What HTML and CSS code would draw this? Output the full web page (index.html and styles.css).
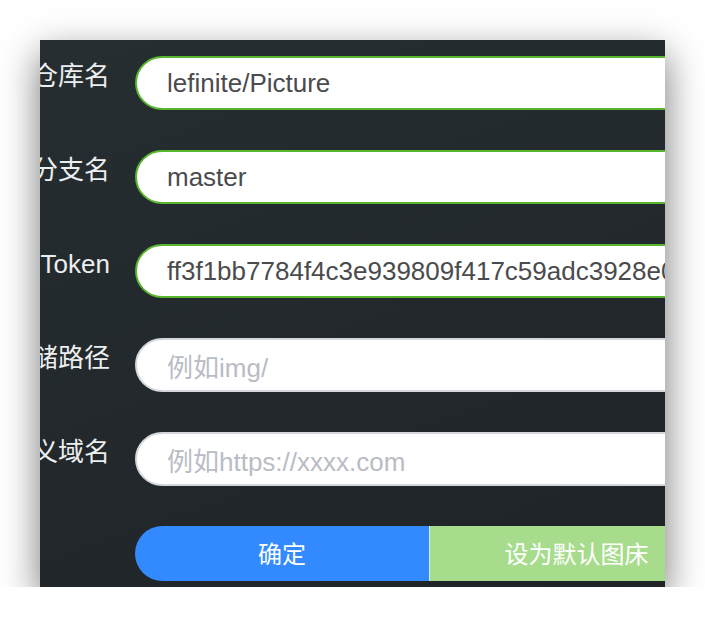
FILE: index.html
```html
<!DOCTYPE html>
<html lang="zh-CN">
<head>
<meta charset="utf-8">
<title>图床设置</title>
<link rel="stylesheet" href="styles.css">
</head>
<body>
<div class="frame">
  <form class="form">
    <div class="row">
      <label class="label">仓库名</label>
      <div class="field valid"><span class="value">lefinite/Picture</span></div>
    </div>
    <div class="row">
      <label class="label">分支名</label>
      <div class="field valid"><span class="value">master</span></div>
    </div>
    <div class="row">
      <label class="label">Token</label>
      <div class="field valid"><span class="value">ff3f1bb7784f4c3e939809f417c59adc3928e0a1</span></div>
    </div>
    <div class="row">
      <label class="label">存储路径</label>
      <div class="field"><span class="placeholder">例如img/</span></div>
    </div>
    <div class="row">
      <label class="label">自定义域名</label>
      <div class="field"><span class="placeholder">例如https://xxxx.com</span></div>
    </div>
    <div class="row">
      <span class="label"></span>
      <div class="buttons">
        <button type="button" class="btn btn-primary">确定</button>
        <button type="button" class="btn btn-success">设为默认图床</button>
      </div>
    </div>
  </form>
</div>
</body>
</html>
```

FILE: styles.css
```css
html, body {
  margin: 0;
  padding: 0;
  background: #ffffff;
}

body {
  font-family: "Liberation Sans", "Noto Sans CJK SC", sans-serif;
  padding: 40px 0 0 40px;
}

.frame {
  width: 625px;
  height: 547px;
  overflow: hidden;
  background: linear-gradient(160deg, #262e31 0%, #22282b 55%, #1f2527 100%);
  box-shadow: 0 14px 36px rgba(0, 0, 0, 0.55);
}

.form {
  margin: 16px 0 0 -105px;
  display: flex;
  flex-direction: column;
  gap: 40px;
}

.row {
  display: grid;
  grid-template-columns: 200px 590px;
  align-items: start;
}

.label {
  display: block;
  white-space: nowrap;
  text-align: right;
  padding-right: 25px;
  font-size: 26px;
  line-height: 40px;
  color: #eceeef;
}

.field {
  box-sizing: border-box;
  height: 54px;
  border: 2px solid #d3d6dd;
  border-radius: 27px;
  background: #ffffff;
  padding: 0 0 0 30px;
  display: flex;
  align-items: center;
  overflow: hidden;
  white-space: nowrap;
  font-size: 26px;
}

.field.valid {
  border-color: #58b52e;
}

.value {
  color: #4a4b4d;
}

.placeholder {
  color: #b9bcc5;
}

.buttons {
  display: flex;
  height: 55px;
}

.btn {
  width: 294px;
  height: 55px;
  border: none;
  margin: 0;
  padding: 0 0 3px;
  font-family: "Liberation Sans", "Noto Sans CJK SC", sans-serif;
  font-size: 24px;
  color: #ffffff;
  cursor: pointer;
}

.btn-primary {
  background: #338aff;
  border-radius: 27.5px 0 0 27.5px;
}

.btn-success {
  background: #a8dc8d;
  border-left: 1px solid #d6efc9;
  border-radius: 0 27.5px 27.5px 0;
}
```
